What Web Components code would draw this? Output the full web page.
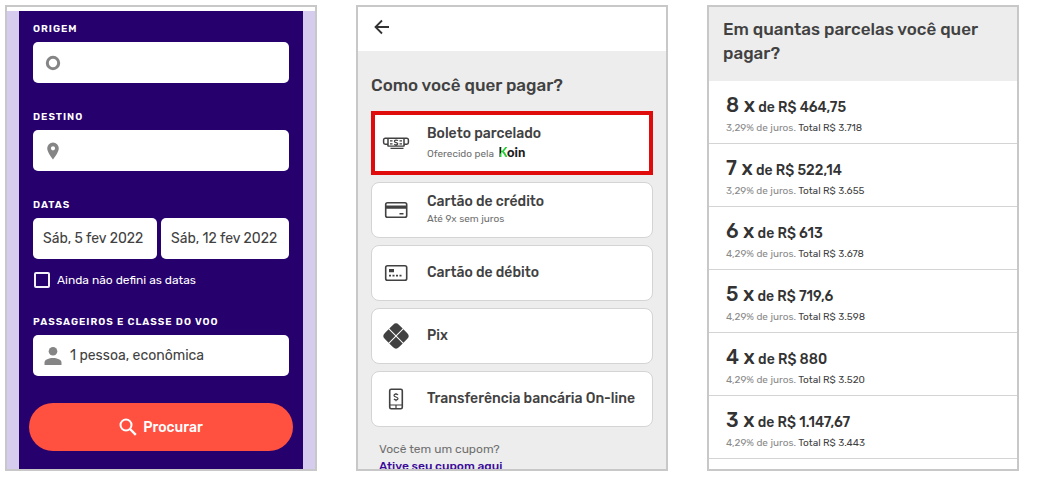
<!DOCTYPE html>
<html lang="pt-BR">
<head>
<meta charset="utf-8">
<meta name="viewport" content="width=device-width, initial-scale=1">
<title>Passagens com boleto parcelado</title>
<style>
  body { margin: 0; background: #fff; color: #414141; font-family: Rubik, Inter, Roboto, sans-serif; font-size: 14px; }
</style>
</head>
<body>
<travel-steps>
  <phone-screen>
    <search-form></search-form>
  </phone-screen>
  <phone-screen>
    <payment-picker heading="Como você quer pagar?">
      <payment-option icon="cash" highlighted>Boleto parcelado<span slot="note">Oferecido pela <koin-logo></koin-logo></span></payment-option>
      <payment-option icon="credit">Cartão de crédito<span slot="note">Até 9x sem juros</span></payment-option>
      <payment-option icon="debit">Cartão de débito</payment-option>
      <payment-option icon="pix">Pix</payment-option>
      <payment-option icon="phone">Transferência bancária On-line</payment-option>
    </payment-picker>
  </phone-screen>
  <phone-screen>
    <installment-list heading="Em quantas parcelas você quer pagar?">
      <installment-row times="8" rate="3,29%" total="3.718">464,75</installment-row>
      <installment-row times="7" rate="3,29%" total="3.655">522,14</installment-row>
      <installment-row times="6" rate="4,29%" total="3.678">613</installment-row>
      <installment-row times="5" rate="4,29%" total="3.598">719,6</installment-row>
      <installment-row times="4" rate="4,29%" total="3.520">880</installment-row>
      <installment-row times="3" rate="4,29%" total="3.443">1.147,67</installment-row>
    </installment-list>
  </phone-screen>
</travel-steps>

<script>
const ICONS = {
  origin: `<svg width="18" height="18" viewBox="0 0 18 18"><circle cx="9" cy="9" r="5.700" fill="none" stroke="#858585" stroke-width="3"/></svg>`,
  pin: `<svg width="18" height="18" viewBox="0 0 18 18"><path fill="#858585" fill-rule="evenodd" d="M9 0.5a5.8 5.8 0 0 0-5.8 5.8C3.200 10.500 9 17.500 9 17.500s5.800-7 5.800-11.200A5.800 5.800 0 0 0 9 .5Zm0 3.700a2.100 2.100 0 1 1 0 4.200 2.100 2.100 0 0 1 0-4.200Z"/></svg>`,
  person: `<svg width="18" height="18" viewBox="0 0 18 18"><circle cx="9" cy="4.300" r="4.300" fill="#858585"/><path fill="#858585" d="M.5 18v-2.500C.5 12.500 5 11 9 11s8.500 1.500 8.500 4.500V18Z"/></svg>`,
  search: `<svg width="18" height="18" viewBox="0 0 18 18"><circle cx="7" cy="7" r="5.500" fill="none" stroke="#fff" stroke-width="2"/><path d="m11 11 5.800 5.800" stroke="#fff" stroke-width="2.400"/></svg>`,
  back: `<svg width="16" height="16" viewBox="0 0 16 16"><path d="M15 8H2M8 1.500 1.500 8 8 14.500" fill="none" stroke="#333" stroke-width="1.800"/></svg>`,
  cash: `<svg width="28" height="28" viewBox="0 0 28 28" fill="none" stroke="#414141"><path stroke-width="1.500" d="M6 15.200H3.200a1.600 1.600 0 0 1-1.600-1.600V10.900A1.600 1.600 0 0 1 3.200 9.300H24.800a1.600 1.600 0 0 1 1.600 1.600v2.700a1.600 1.600 0 0 1-1.600 1.600H22M6 9.500v7.400M22 9.500v7.400"/><path stroke-width="1.200" d="M5.500 17.200h17M8.500 19.300h13M8 11.800h2.500M8 14.800h2.500M17.500 11.800H20M17.500 14.800H20M16 11.600c-1-.8-3.600-.8-3.600.6 0 1.800 3.400.9 3.400 2.600 0 1.300-2.500 1.300-3.600.4"/></svg>`,
  credit: `<svg width="28" height="28" viewBox="0 0 28 28"><rect x="3.700" y="6.700" width="21" height="14.600" rx="1.800" fill="none" stroke="#414141" stroke-width="1.600"/><path fill="#414141" d="M4 9.500h20.500v3.300H4zM17.500 17h4v1.400h-4z"/></svg>`,
  debit: `<svg width="28" height="28" viewBox="0 0 28 28"><rect x="3.700" y="6.700" width="21" height="14.600" rx="1.800" fill="none" stroke="#414141" stroke-width="1.600"/><path fill="#414141" d="M7 10h5v3.300H7zM7 15.800h2v1.600H7zM10.500 15.800h2v1.600h-2zM14 15.800h2v1.600h-2zM17.500 15.800h2v1.600h-2z"/></svg>`,
  pix: `<svg width="28" height="28" viewBox="0 0 28 28"><g transform="rotate(45 14 14)" fill="#414141"><path d="M8 4h5.500v9.500H4V8a4 4 0 0 1 4-4ZM14.500 4H20a4 4 0 0 1 4 4v5.500h-9.500ZM4 14.500h9.500V24H8a4 4 0 0 1-4-4ZM14.500 14.500H24V20a4 4 0 0 1-4 4h-5.500Z"/></g></svg>`,
  phone: `<svg width="28" height="28" viewBox="0 0 28 28" fill="none" stroke="#414141"><rect x="7.700" y="4.200" width="12.600" height="19.600" rx="1.500" stroke-width="1.600"/><path stroke-width="1.200" d="M8 20h12M14 20v3.500M14 8v1M14 15v1.200M16 10c-.8-1.200-4-1.200-4 .5 0 1.800 4 1.200 4 3 0 1.700-3.200 1.700-4 .4"/></svg>`
};

function define(name, render) {
  customElements.define(name, class extends HTMLElement {
    constructor() {
      super();
      this.attachShadow({ mode: "open" });
    }
    connectedCallback() {
      this.shadowRoot.innerHTML = render(this);
    }
  });
}

define("travel-steps", () => `
  <style>
    :host { display: block; padding: 5px 27px 30px 5px; }
    main { display: grid; grid-template-columns: repeat(3, minmax(0, 1fr)); gap: 39px; }
  </style>
  <main><slot></slot></main>`);

define("phone-screen", () => `
  <style>
    :host { display: block; box-sizing: border-box; aspect-ratio: 156 / 233; min-height: 0; overflow: hidden; border: 2px solid #c8c8c8; background: #fff; }
    section { height: 100%; overflow: hidden; }
  </style>
  <section><slot></slot></section>`);

define("form-field", el => `
  <style>
    :host { display: block; min-width: 0; }
    label { display: block; }
    .caption { display: block; line-height: 14px; margin-bottom: 6px; color: #fff; font-size: 10px; font-weight: 600; letter-spacing: 1px; text-transform: uppercase; }
    .box { display: flex; align-items: center; gap: 8px; box-sizing: border-box; height: 41px; padding: 0 10px; background: #fff; border-radius: 5px; }
    .box.icon { padding-left: 11px; }
    svg { display: block; flex: none; }
    input { flex: 1; min-width: 0; width: 100%; padding: 0; border: 0; outline: 0; background: none; color: #414141; font: inherit; }
  </style>
  <label>
    ${el.hasAttribute("caption") ? `<span class="caption">${el.getAttribute("caption")}</span>` : ""}
    <span class="box ${el.hasAttribute("icon") ? "icon" : ""}">
      ${ICONS[el.getAttribute("icon")] || ""}
      <input type="text" value="${el.getAttribute("value") || ""}" aria-label="${el.getAttribute("hint") || el.getAttribute("caption")}">
    </span>
  </label>`);

define("search-form", () => `
  <style>
    :host { display: block; box-sizing: border-box; height: 100%; padding: 4px 12px 0; background: linear-gradient(#fff 4px, #d6cdee 4px); }
    form { box-sizing: border-box; height: 100%; padding: 11px 10px 0; background: #26006c; display: flex; flex-direction: column; }
    .fields { display: flex; flex-direction: column; gap: 27px; padding: 0 4px; }
    fieldset { min-width: 0; margin: 0; padding: 0; border: 0; }
    legend { padding: 0; line-height: 14px; margin-bottom: 6px; color: #fff; font-size: 10px; font-weight: 600; letter-spacing: 1px; text-transform: uppercase; }
    .dates { display: grid; grid-template-columns: 31fr 32fr; gap: 4px; }
    .check { display: flex; align-items: center; gap: 7px; margin-top: 13px; line-height: 16px; color: #fff; font-size: 12px; }
    .check input { appearance: none; flex: none; box-sizing: border-box; width: 16px; height: 16px; margin: 0 0 0 1px; border: 2px solid #f4f0fa; border-radius: 2px; }
    button { display: flex; justify-content: center; align-items: center; gap: 6px; height: 48px; margin-top: 27px; border: 0; border-radius: 24px; background: #ff5040; color: #fff; font: inherit; font-weight: 500; }
  </style>
  <form>
    <div class="fields">
      <form-field caption="Origem" icon="origin"></form-field>
      <form-field caption="Destino" icon="pin"></form-field>
      <fieldset>
        <legend>Datas</legend>
        <div class="dates">
          <form-field value="Sáb, 5 fev 2022" hint="Ida"></form-field>
          <form-field value="Sáb, 12 fev 2022" hint="Volta"></form-field>
        </div>
        <label class="check"><input type="checkbox">Ainda não defini as datas</label>
      </fieldset>
      <form-field caption="Passageiros e classe do voo" icon="person" value="1 pessoa, econômica"></form-field>
    </div>
    <button type="button">${ICONS.search}Procurar</button>
  </form>`);

define("koin-logo", () => `
  <style>
    :host { display: inline-block; margin-left: 2px; color: #1b1b1b; font: 900 13px/12px Lato, sans-serif; }
    .k { color: transparent; background: linear-gradient(100deg, #1b1b1b 34%, #21cf35 36%); -webkit-background-clip: text; background-clip: text; }
  </style><span class="k">K</span>oin`);

define("payment-option", el => `
  <style>
    :host { display: block; }
    button { display: flex; align-items: center; gap: 17px; box-sizing: border-box; width: 100%; height: 56px; padding: 0 10px; border: 1px solid #d4d4d4; border-radius: 8px; background: #fff; color: #414141; font: inherit; text-align: left; }
    :host([highlighted]) button { height: 64px; padding: 0 7px; border: 4px solid #e00b0b; border-radius: 0; }
    svg { display: block; flex: none; }
    .text { display: flex; flex-direction: column; }
    .name { line-height: 18px; font-size: 14px; font-weight: 500; }
    ::slotted([slot="note"]) { display: block; line-height: 16px; color: #707070; font-size: 10px; }
    :host([highlighted]) .text { gap: 3px; }
  </style>
  <button type="button">
    ${ICONS[el.getAttribute("icon")]}
    <span class="text"><span class="name"><slot></slot></span><slot name="note"></slot></span>
  </button>`);

define("payment-picker", el => `
  <style>
    :host { display: block; min-height: 100%; background: #ededed; }
    header { display: flex; align-items: center; height: 44px; padding: 0 16px; background: #fff; }
    header button { display: flex; margin-bottom: 4px; padding: 0; border: 0; background: none; }
    .body { padding: 22px 13px 0; }
    h2 { margin: 0 0 14px; line-height: 24px; font-size: 17px; font-weight: 500; }
    .options { display: flex; flex-direction: column; gap: 7px; }
    .coupon { padding: 14px 8px 0; line-height: 17px; color: #707070; font-size: 12px; }
    p { margin: 0; }
    a { color: #3a0a9a; font-weight: 500; text-decoration: none; }
  </style>
  <header><button type="button" aria-label="Voltar">${ICONS.back}</button></header>
  <div class="body">
    <h2>${el.getAttribute("heading")}</h2>
    <div class="options"><slot></slot></div>
    <div class="coupon"><p>Você tem um cupom?</p><a href="#cupom">Ative seu cupom aqui</a></div>
  </div>`);

define("installment-row", el => `
  <style>
    :host { display: block; box-sizing: border-box; height: 63px; padding: 12px 17px 0; border-bottom: 1px solid #d4d4d4; }
    p { margin: 0; }
    .price { line-height: 25px; font-size: 14px; font-weight: 500; color: #333; }
    .times { font-size: 20px; }
    .detail { line-height: 16px; font-size: 10px; color: #8a8a8a; }
    .total { color: #414141; }
  </style>
  <p class="price"><span class="times">${el.getAttribute("times")} x</span> de R$ <slot></slot></p>
  <p class="detail">${el.getAttribute("rate")} de juros. <span class="total">Total R$ ${el.getAttribute("total")}</span></p>`);

define("installment-list", el => `
  <style>
    :host { display: block; }
    header { padding: 10px 14px 16px; background: #ededed; }
    h2 { margin: 0; line-height: 24px; font-size: 17px; font-weight: 500; }
  </style>
  <header><h2>${el.getAttribute("heading")}</h2></header>
  <slot></slot>`);
</script>
</body>
</html>
